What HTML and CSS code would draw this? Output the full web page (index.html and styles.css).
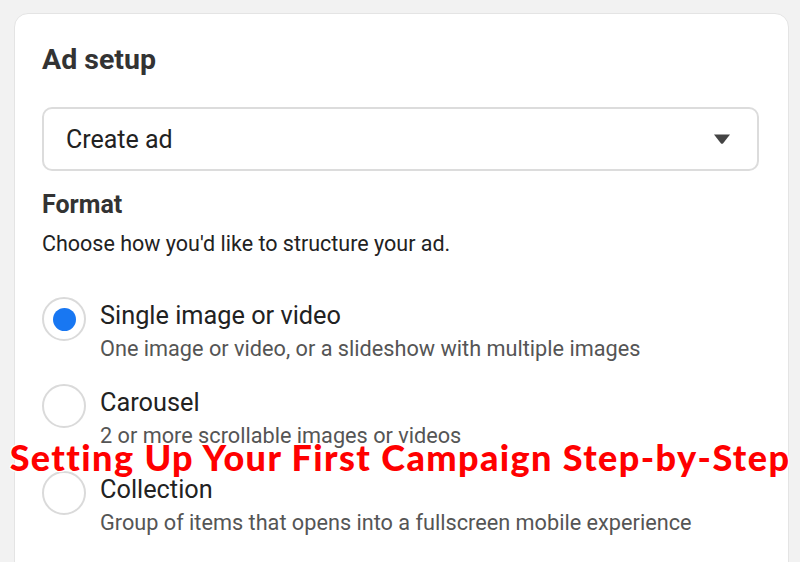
FILE: index.html
```html
<!DOCTYPE html>
<html lang="en">
<head>
  <meta charset="UTF-8" />
  <meta name="viewport" content="width=device-width, initial-scale=1" />
  <title>Ad setup</title>
  <link rel="stylesheet" href="styles.css">
</head>
<body>
  <div class="card">
    <h1>Ad setup</h1>
    <div class="select">
      <span>Create ad</span>
      <svg class="caret" width="18" height="12" viewBox="0 0 18 12"><path d="M1 1.5 H17 L10.2 10.2 Q9 11.5 7.8 10.2 Z" fill="#444"/></svg>
    </div>
    <h2>Format</h2>
    <p class="hint">Choose how you'd like to structure your ad.</p>

    <div class="options">
      <div class="option">
        <span class="radio checked"></span>
        <div class="text">
          <div class="label">Single image or video</div>
          <div class="desc">One image or video, or a slideshow with multiple images</div>
        </div>
      </div>
      <div class="option">
        <span class="radio"></span>
        <div class="text">
          <div class="label">Carousel</div>
          <div class="desc">2 or more scrollable images or videos</div>
        </div>
      </div>
      <div class="option">
        <span class="radio"></span>
        <div class="text">
          <div class="label">Collection</div>
          <div class="desc">Group of items that opens into a fullscreen mobile experience</div>
        </div>
      </div>
    </div>
  </div>

  <div class="banner">Setting Up Your First Campaign Step-by-Step</div>
</body>
</html>
```

FILE: styles.css
```css
* {
  box-sizing: border-box;
}
body {
  margin: 0;
  height: 562px;
  overflow: hidden;
  background: #f2f2f2;
  font-family: Roboto, "Liberation Sans", Arial, sans-serif;
  color: #1c1e21;
  padding: 13px 11px 0 14px;
}

.card {
  background: #fff;
  border: 1px solid #e4e4e4;
  border-radius: 14px;
  padding: 29px 29px 40px 27px;
  height: 600px;
}

h1 {
  margin: 0;
  font-size: 28.5px;
  line-height: 34px;
  font-weight: bold;
  color: #333;
}

.select {
  margin-top: 30px;
  height: 64px;
  border: 2px solid #dcdcdc;
  border-radius: 10px;
  display: flex;
  align-items: center;
  justify-content: space-between;
  padding: 0 26px 0 22px;
  font-size: 25px;
  color: #222;
}

h2 {
  margin: 19px 0 0;
  font-size: 25px;
  line-height: 30px;
  font-weight: bold;
  color: #333;
}

.hint {
  margin: 11px 0 0;
  font-size: 21.5px;
  line-height: 26px;
  color: #222;
}

.options {
  margin-top: 40px;
  display: flex;
  flex-direction: column;
  gap: 22px;
}

.option {
  display: flex;
  align-items: flex-start;
  gap: 14px;
}

.radio {
  flex: none;
  width: 44px;
  height: 44px;
  border: 2px solid #dadada;
  border-radius: 50%;
  display: flex;
  align-items: center;
  justify-content: center;
}

.radio.checked::after {
  content: '';
  width: 23px;
  height: 23px;
  border-radius: 50%;
  background: #1877f2;
}

.text {
  margin-top: 4px;
}

.label {
  font-size: 25.3px;
  line-height: 30px;
  color: #222;
}

.desc {
  margin-top: 5px;
  font-size: 21.7px;
  line-height: 26px;
  color: #555;
}

.banner {
  position: absolute;
  left: 0;
  right: 0;
  top: 435px;
  text-align: center;
  white-space: nowrap;
  font-family: Lato, "Open Sans", sans-serif;
  font-weight: 900;
  font-size: 36px;
  letter-spacing: 1.4px;
  color: #f00;
  text-shadow: 0 0 2px #fff, 0 0 2px #fff, 1px 1px 0 #fff, -1px -1px 0 #fff, 1px -1px 0 #fff, -1px 1px 0 #fff;
}
```
